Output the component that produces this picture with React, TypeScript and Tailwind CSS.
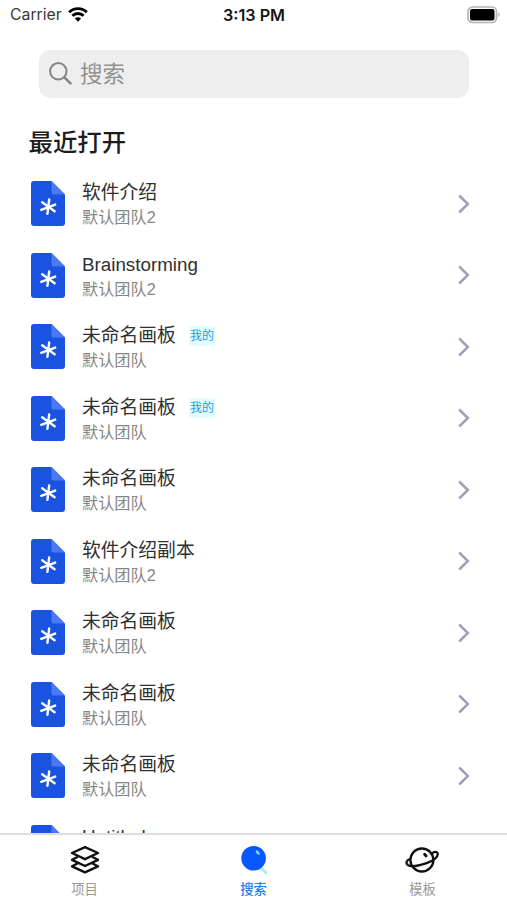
type Board = {
  title: string;
  team: string;
  mine?: boolean;
};

const boards: Board[] = [
  { title: "软件介绍", team: "默认团队2" },
  { title: "Brainstorming", team: "默认团队2" },
  { title: "未命名画板", team: "默认团队", mine: true },
  { title: "未命名画板", team: "默认团队", mine: true },
  { title: "未命名画板", team: "默认团队" },
  { title: "软件介绍副本", team: "默认团队2" },
  { title: "未命名画板", team: "默认团队" },
  { title: "未命名画板", team: "默认团队" },
  { title: "未命名画板", team: "默认团队" },
  { title: "Untitled", team: "默认团队" },
];

function WifiIcon() {
  return (
    <svg width="20" height="15" viewBox="0 0 20 15" fill="none" stroke="#000" strokeWidth="2.9" className="mb-[2px]">
      <path d="M1.2 5.3a12.4 12.4 0 0 1 17.6 0" />
      <path d="M4.4 8.8a7.9 7.9 0 0 1 11.2 0" />
      <path d="M10 14.7 6.9 11.6a4.4 4.4 0 0 1 6.2 0Z" fill="#000" stroke="none" />
    </svg>
  );
}

function BatteryIcon() {
  return (
    <svg width="34" height="18" viewBox="0 0 34 18">
      <rect x="1" y="1" width="28.5" height="15.5" rx="4.5" fill="#fff" stroke="#b4b4b4" strokeWidth="1.7" />
      <rect x="3" y="3" width="24.5" height="11.5" rx="2" fill="#000" />
      <path d="M31.3 6.7c1.8.5 1.8 3.6 0 4.1Z" fill="#a8a8a8" />
    </svg>
  );
}

function FileIcon() {
  return (
    <svg width="34" height="45" viewBox="0 0 34 45" className="shrink-0">
      <path d="M3 0h17.5L34 13.5V42a3 3 0 0 1-3 3H3a3 3 0 0 1-3-3V3a3 3 0 0 1 3-3Z" fill="#1a53e0" />
      <path d="M20.5 0 34 13.5H23a2.5 2.5 0 0 1-2.5-2.5Z" fill="#4a79f2" />
      <g stroke="#fff" strokeWidth="2.4" strokeLinecap="round">
        <path d="m18.2 18.5-1.8 14.3" />
        <path d="m11.2 21.2 12.4 9" />
        <path d="M10.2 28.8 24.2 23.6" />
      </g>
    </svg>
  );
}

function LayersIcon() {
  return (
    <svg width="30" height="30" viewBox="0 0 30 30" fill="none" stroke="#111" strokeWidth="2.4" strokeLinejoin="round" strokeLinecap="round">
      <path d="M15 2.2 28 8 15 14.2 2 8Z" />
      <path d="M7 12.2 2 14.8 15 21l13-6.2-5-2.6" />
      <path d="M7 18.8 2 21.3 15 27.4l13-6.1-5-2.5" />
    </svg>
  );
}

function SearchTabIcon() {
  return (
    <svg width="30" height="30" viewBox="0 0 30 30">
      <path d="m22 23 4.8 4.8" stroke="#a9ecfb" strokeWidth="3" strokeLinecap="round" />
      <circle cx="14.6" cy="13.2" r="12.3" fill="#0758fa" />
      <path d="m17.9 6.6 1.7 2" stroke="#7fd6fb" strokeWidth="2.4" strokeLinecap="round" />
    </svg>
  );
}

function PlanetIcon() {
  return (
    <svg width="36" height="30" viewBox="0 0 36 30" fill="none" stroke="#111" strokeWidth="2.3" strokeLinecap="round">
      <circle cx="16.9" cy="15" r="11.5" />
      <path d="M4.4 14.4c-3 .8-3.8 3.6-1.8 5.4 2.8 2.4 11.4 1.1 19-1.6 6.3-2.3 11.9-6.2 11.1-9.6-.5-2-3-2.2-5-.7" />
      <path d="m19.6 9.3 1.5 1.7" strokeWidth="2.8" />
    </svg>
  );
}

function BoardRow({ title, team, mine }: Board) {
  return (
    <li className="flex h-[71.5px] shrink-0 items-center pr-[37px] pl-[31px]">
      <FileIcon />
      <div className="ml-[17px] flex-1 pt-[1.5px]">
        <div className="flex h-[25px] items-center pt-px">
          <span className="text-[18.8px] leading-[26px] text-[#303030]">{title}</span>
          {mine && (
            <span className="ml-[13px] flex h-5 items-center bg-[#e5fcff] px-px text-xs text-[#1697f6]">我的</span>
          )}
        </div>
        <p className="text-[16.2px] leading-6 text-[#858585]">{team}</p>
      </div>
      <svg width="12" height="20" viewBox="0 0 12 20" fill="none" stroke="#a0a0b9" strokeWidth="2.5">
        <path d="m1.2 1.5 8.7 8.5-8.7 8.5" />
      </svg>
    </li>
  );
}

export default function App() {
  return (
    <div className="flex h-[900px] w-[507px] flex-col overflow-hidden bg-white font-['Liberation_Sans','Noto_Sans_CJK_SC',sans-serif]">
      <header className="grid h-[30px] shrink-0 grid-cols-3 items-center pr-[6px] pl-[10px] font-['Inter','Noto_Sans_CJK_SC',sans-serif] text-base text-[#161616]">
        <div className="flex items-center gap-[6px]">
          <span className="text-[15.8px] text-[#383838]">Carrier</span>
          <WifiIcon />
        </div>
        <span className="pr-[3px] text-center text-[16.2px] font-semibold whitespace-nowrap">3:13 PM</span>
        <div className="flex justify-end pb-px">
          <BatteryIcon />
        </div>
      </header>

      <div className="mt-5 mr-[38px] ml-[39px] flex h-[48px] shrink-0 items-center rounded-[12px] bg-[#eeeeee] pl-[10px]">
        <svg width="24" height="24" viewBox="0 0 24 24" fill="none" stroke="#858585" strokeWidth="2">
          <circle cx="9.3" cy="9.3" r="8.2" />
          <path d="m15.2 15.2 7 7" strokeWidth="2.5" />
        </svg>
        <span className="ml-[7px] pt-[2px] text-[22.5px] text-[#919191]">搜索</span>
      </div>

      <h1 className="mt-[25px] ml-[28.5px] h-[40px] shrink-0 text-[24.4px] leading-[40px] font-medium text-[#1c1c1c]">最近打开</h1>

      <ul className="mt-[5px] flex min-h-0 flex-1 flex-col overflow-hidden">
        {boards.map((board, i) => (
          <BoardRow key={i} {...board} />
        ))}
      </ul>

      <nav className="grid h-[67px] shrink-0 grid-cols-3 border-t-2 border-[#dedede] bg-white text-[13.3px] text-[#999]">
        <a className="flex flex-col items-center pt-[10px]">
          <LayersIcon />
          <span className="mt-[5px] leading-5">项目</span>
        </a>
        <a className="flex flex-col items-center pt-[10px] font-medium text-[#227ef8]">
          <SearchTabIcon />
          <span className="mt-[5px] leading-5">搜索</span>
        </a>
        <a className="flex flex-col items-center pt-[10px]">
          <PlanetIcon />
          <span className="mt-[5px] leading-5">模板</span>
        </a>
      </nav>
    </div>
  );
}
